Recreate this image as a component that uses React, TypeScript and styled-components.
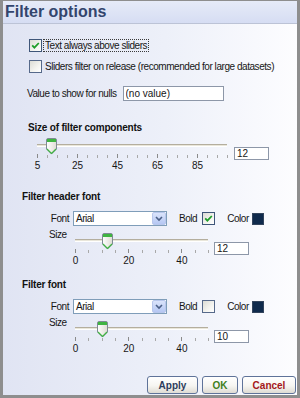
import React from "react";
import styled, { createGlobalStyle } from "styled-components";

const GlobalStyle = createGlobalStyle`
  html, body {
    margin: 0;
    padding: 0;
  }
  body {
    font-family: "Liberation Sans", Arial, sans-serif;
    font-size: 10px;
    letter-spacing: -0.45px;
    color: #161616;
  }
  * {
    box-sizing: border-box;
  }
`;

const Window = styled.div`
  width: 300px;
  height: 398px;
  display: flex;
  flex-direction: column;
  border: 3px solid #8e8e8e;
  border-top: 1px solid #8e8e8e;
  background: linear-gradient(to right, #e0e4f3 0%, #edf0f9 55%, #fdfdff 100%);
`;

const TitleBar = styled.div`
  height: 23px;
  padding-left: 2px;
  line-height: 22px;
  font-size: 16px;
  font-weight: 700;
  letter-spacing: 0;
  color: #33456d;
  background: linear-gradient(#e6ebf8, #d6ddf3);
  border-bottom: 1px solid #bcc3d6;
`;

const Body = styled.div`
  flex: 1;
  display: flex;
  flex-direction: column;
`;

const CheckRow = styled.div<{ $top: number }>`
  display: flex;
  align-items: center;
  height: 13px;
  margin-top: ${(p) => p.$top}px;
  margin-left: 26px;
`;

const Box = styled.span<{ $checked?: boolean }>`
  display: inline-flex;
  width: 13px;
  height: 13px;
  flex-shrink: 0;
  border: 1px solid ${(p) => (p.$checked ? "#3f5679" : "#56698a")};
  background: linear-gradient(135deg, #dcdcd5 0%, #f4f4f0 60%, #ffffff 100%);
`;

const CheckLabel = styled.span<{ $focused?: boolean }>`
  margin-left: 1px;
  padding: 0 1px;
  line-height: 11px;
  border: 1px dotted ${(p) => (p.$focused ? "#3a3a3a" : "transparent")};
`;

const NullsRow = styled.div`
  display: flex;
  align-items: center;
  height: 15px;
  margin-top: 13px;
  margin-left: 24px;
`;

const TextInput = styled.input<{ $w: number }>`
  width: ${(p) => p.$w}px;
  height: 15px;
  margin: 0 0 0 6px;
  padding: 0 2px;
  border: 1px solid #8d97a8;
  background: #fff;
  font: inherit;
  color: #161616;
  outline: none;
`;

const SectionTitle = styled.div<{ $top: number; $indent: number }>`
  margin-top: ${(p) => p.$top}px;
  margin-left: ${(p) => p.$indent}px;
  line-height: 13px;
  font-size: 10px;
  font-weight: 700;
  letter-spacing: -0.2px;
  color: #111;
`;

const SliderRow = styled.div`
  display: flex;
  align-items: flex-start;
  margin-top: 4px;
  margin-left: 34px;
`;

const SliderBox = styled.div<{ $w: number }>`
  position: relative;
  width: ${(p) => p.$w}px;
  height: 34px;
  flex-shrink: 0;
`;

const Track = styled.div`
  position: absolute;
  top: 6px;
  left: 0;
  right: 0;
  height: 3px;
  border-top: 1px solid #b4ae9e;
  border-bottom: 1px solid #ffffff;
  background: #e9e6da;
`;

const ThumbSvg = styled.svg`
  position: absolute;
  top: 0;
`;

const TickSvg = styled.svg`
  position: absolute;
  top: 16px;
  left: 0;
`;

const TickLabel = styled.span`
  position: absolute;
  top: 22px;
  line-height: 12px;
  transform: translateX(-50%);
  letter-spacing: 0;
`;

const ValueBox = styled.input<{ $top: number; $gap: number }>`
  width: 35px;
  height: 13px;
  margin: ${(p) => p.$top}px 0 0 ${(p) => p.$gap}px;
  padding: 0 2px;
  border: 1px solid #8d97a8;
  background: #fff;
  font: inherit;
  line-height: 11px;
  color: #161616;
  outline: none;
`;

const FontRow = styled.div`
  display: flex;
  align-items: center;
  height: 15px;
  margin-top: 8px;
`;

const FieldLabel = styled.span<{ $indent: number; $w?: number }>`
  margin-left: ${(p) => p.$indent}px;
  width: ${(p) => (p.$w ? `${p.$w}px` : "auto")};
  text-align: right;
  flex-shrink: 0;
`;

const Select = styled.div`
  display: flex;
  align-items: center;
  width: 94px;
  height: 15px;
  margin-left: 4px;
  padding-left: 2px;
  border: 1px solid #7f9db9;
  background: #fff;
`;

const SelectText = styled.span`
  flex: 1;
  line-height: 13px;
`;

const Arrow = styled.span`
  display: inline-flex;
  width: 14px;
  height: 13px;
  border: 1px solid #b8c7ec;
  border-radius: 2px;
  background: linear-gradient(#dbe4fb, #b5c7f3);
`;

const BoldBox = styled.span`
  display: inline-flex;
  margin-left: 5px;
`;

const Swatch = styled.span`
  width: 12px;
  height: 12px;
  margin-left: 3px;
  background: #0f2a4c;
  border: 1px solid #33445c;
`;

const SizeRow = styled.div`
  display: flex;
  align-items: flex-start;
  margin-top: 3px;
`;

const SizeLabel = styled.span`
  margin-left: 46px;
  width: 26px;
  line-height: 12px;
  flex-shrink: 0;
`;

const SliderSlot = styled.div`
  margin-top: 4px;
`;

const Footer = styled.div`
  margin-top: auto;
  display: flex;
  justify-content: flex-end;
  gap: 4px;
  padding: 0 1px 1px 0;
`;

const Button = styled.button<{ $w: number; $tone: string }>`
  width: ${(p) => p.$w}px;
  height: 18px;
  padding: 0;
  border: 1px solid #5f7399;
  border-radius: 3px;
  background: linear-gradient(#ffffff 0%, #f6f5f1 55%, #dedbd3 100%);
  font-family: "Liberation Sans", Arial, sans-serif;
  font-size: 10px;
  font-weight: 700;
  color: ${(p) => p.$tone};
  cursor: pointer;
`;

const CheckBox: React.FC<{ checked?: boolean }> = ({ checked }) => (
  <Box $checked={checked}>
    {checked && (
      <svg width="11" height="11" viewBox="0 0 11 11">
        <path d="M2.2 5.3 L4.4 7.6 L8.8 3" fill="none" stroke="#1f9e2a" strokeWidth="1.8" />
      </svg>
    )}
  </Box>
);

type SliderProps = {
  min: number;
  max: number;
  value: number;
  step: number;
  major: number;
  width: number;
};

const Slider: React.FC<SliderProps> = ({ min, max, value, step, major, width }) => {
  const pos = (v: number) => ((v - min) / (max - min)) * width;
  const ticks: number[] = [];
  for (let v = min; v <= max; v += step) ticks.push(v);
  const labels: number[] = [];
  for (let v = min; v <= max - step; v += major) labels.push(v);

  return (
    <SliderBox $w={width}>
      <Track />
      <TickSvg width={width + 2} height={5}>
        {ticks.map((v) => {
          const x = Math.round(pos(v)) + 0.5;
          const isMajor = (v - min) % major === 0;
          return (
            <line
              key={v}
              x1={x}
              x2={x}
              y1={isMajor ? 0 : 1}
              y2={4}
              stroke={isMajor ? "#8a8a8a" : "#a9a9a9"}
              strokeWidth="1"
            />
          );
        })}
      </TickSvg>
      {labels.map((v) => (
        <TickLabel key={v} style={{ left: pos(v) + 0.5 }}>
          {v}
        </TickLabel>
      ))}
      <ThumbSvg width="11" height="17" viewBox="0 0 11 17" style={{ left: pos(value) - 5 }}>
        <defs>
          <linearGradient id="thumbFill" x1="0" y1="0" x2="1" y2="0">
            <stop offset="0" stopColor="#ffffff" />
            <stop offset="1" stopColor="#dedcd4" />
          </linearGradient>
        </defs>
        <path
          d="M0.5 2 Q0.5 0.5 2 0.5 H9 Q10.5 0.5 10.5 2 V11 L5.5 16 L0.5 11 Z"
          fill="url(#thumbFill)"
          stroke="#7f8a94"
        />
        <rect x="1" y="1" width="9" height="3" fill="#3fb442" />
        <path d="M1 11 L5.5 15.4 L10 11" fill="none" stroke="#3fb442" strokeWidth="1.2" />
      </ThumbSvg>
    </SliderBox>
  );
};

const FontSection: React.FC<{ title: string; bold: boolean; size: number; top: number }> = ({
  title,
  bold,
  size,
  top,
}) => (
  <>
    <SectionTitle $top={top} $indent={19}>
      {title}
    </SectionTitle>
    <FontRow>
      <FieldLabel $indent={37} $w={29}>
        Font
      </FieldLabel>
      <Select>
        <SelectText>Arial</SelectText>
        <Arrow>
          <svg width="12" height="11" viewBox="0 0 12 11">
            <path d="M3 4 L6 7 L9 4" fill="none" stroke="#4b5f86" strokeWidth="1.6" />
          </svg>
        </Arrow>
      </Select>
      <FieldLabel $indent={12}>Bold</FieldLabel>
      <BoldBox>
        <CheckBox checked={bold} />
      </BoldBox>
      <FieldLabel $indent={12}>Color</FieldLabel>
      <Swatch />
    </FontRow>
    <SizeRow>
      <SizeLabel>Size</SizeLabel>
      <SliderSlot>
        <Slider min={0} max={50} value={size} step={5} major={20} width={133} />
      </SliderSlot>
      <ValueBox readOnly value={String(size)} $top={13} $gap={6} />
    </SizeRow>
  </>
);

export default function App() {
  return (
    <>
      <GlobalStyle />
      <Window>
        <TitleBar>Filter options</TitleBar>
        <Body>
          <CheckRow $top={15}>
            <CheckBox checked />
            <CheckLabel $focused>Text always above sliders</CheckLabel>
          </CheckRow>
          <CheckRow $top={8}>
            <CheckBox />
            <CheckLabel>Sliders filter on release (recommended for large datasets)</CheckLabel>
          </CheckRow>
          <NullsRow>
            <span>Value to show for nulls</span>
            <TextInput readOnly value="(no value)" $w={101} />
          </NullsRow>

          <SectionTitle $top={20} $indent={25}>
            Size of filter components
          </SectionTitle>
          <SliderRow>
            <Slider min={5} max={100} value={12} step={5} major={20} width={190} />
            <ValueBox readOnly value="12" $top={9} $gap={7} />
          </SliderRow>

          <FontSection title="Filter header font" bold size={12} top={18} />
          <FontSection title="Filter font" bold={false} size={10} top={11} />

          <Footer>
            <Button $w={51} $tone="#2c3c5c">
              Apply
            </Button>
            <Button $w={36} $tone="#3f7f1c">
              OK
            </Button>
            <Button $w={54} $tone="#a4161a">
              Cancel
            </Button>
          </Footer>
        </Body>
      </Window>
    </>
  );
}
